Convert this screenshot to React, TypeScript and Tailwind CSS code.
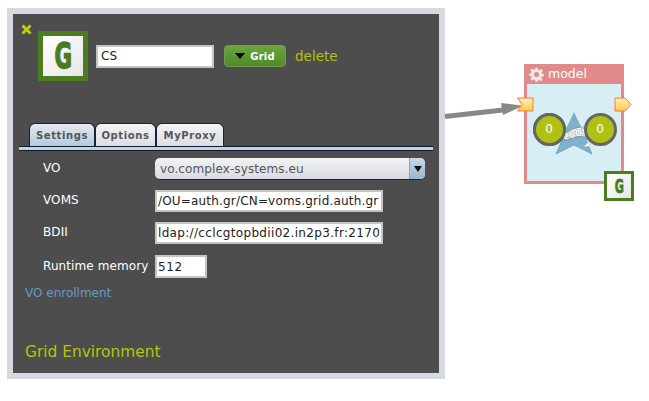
import React from "react";

const dv = "font-['DejaVu_Sans',sans-serif]";

function GBadge({ big }: { big?: boolean }) {
  return big ? (
    <div className="w-[50px] h-[50px] shrink-0 border-[5px] border-[#4b7c1f] bg-gradient-to-br from-white to-[#e6e6e6] flex items-center justify-center">
      <span className="font-['DejaVu_Sans_Condensed',sans-serif] font-bold text-[36px] leading-none text-[#4b7c1f] inline-block scale-x-[0.66] [-webkit-text-stroke:1.4px_#4b7c1f]">G</span>
    </div>
  ) : (
    <div className="w-[30px] h-[30px] border-[3px] border-[#4b7c1f] bg-gradient-to-br from-white to-[#e6e6e6] flex items-center justify-center">
      <span className="font-['DejaVu_Sans_Condensed',sans-serif] font-bold text-[20px] leading-none text-[#4b7c1f] inline-block scale-x-[0.62] [-webkit-text-stroke:0.8px_#4b7c1f]">G</span>
    </div>
  );
}

function Tab({ label, active, w }: { label: string; active?: boolean; w: string }) {
  return (
    <div
      className={`${w} h-[23px] border border-b-0 border-[#16233a] rounded-t-[6px] flex items-center justify-center text-[10px] font-bold tracking-[0.6px] text-[#55555c] ${
        active ? "bg-gradient-to-b from-[#e4e8ee] to-[#b4cade]" : "bg-gradient-to-b from-[#f4f4f6] to-[#dcdde2]"
      }`}
    >
      {label}
    </div>
  );
}

function Field({ value, w, h, track }: { value: string; w: string; h: string; track: string }) {
  return (
    <div className={`${w} ${h} ${track} bg-white border-2 border-[#c4c4c4] flex items-center pl-[1px] text-[12px] text-[#222] whitespace-nowrap overflow-hidden`}>
      {value}
    </div>
  );
}

function Row({ label, children, cls }: { label: string; children: React.ReactNode; cls: string }) {
  return (
    <div className={`flex items-center ${cls}`}>
      <div className="w-[112px] pb-[2px] text-[12px] text-white tracking-[0.1px] whitespace-nowrap">{label}</div>
      {children}
    </div>
  );
}

function Slot({ input }: { input?: boolean }) {
  return (
    <svg width="18" height="16" viewBox="0 0 18 16" className="block">
      <defs>
        <linearGradient id={input ? "si" : "so"} x1="0" y1="0" x2="0" y2="1">
          <stop offset="0" stopColor="#fff2b8" />
          <stop offset="1" stopColor="#fcc850" />
        </linearGradient>
      </defs>
      {input ? (
        <path d="M0.5 1 H16 V14 H0.5 L5 7.500 Z" fill="url(#si)" stroke="#f97b2e" />
      ) : (
        <path d="M1 1 H11 L17 7.500 L11 14 H1 Z" fill="url(#so)" stroke="#f97b2e" />
      )}
    </svg>
  );
}

function Bubble() {
  return (
    <div className="relative w-[33px] h-[33px] rounded-full bg-[#b0c114] border-[3px] border-[#666] flex items-center justify-center text-[12px] text-white">
      0
    </div>
  );
}

export default function App() {
  return (
    <div className={`relative w-[649px] h-[401px] bg-white overflow-hidden pt-[8px] pl-[7px] ${dv}`}>
      {/* panel */}
      <div className="relative w-[438px] h-[371px] border-[6px] border-[#d6d9e0] bg-[#4d4d4d]">
        <svg width="11" height="11" viewBox="0 0 11 11" className="absolute left-[8px] top-[10px]">
          <path d="M1.500 1.500 L9.500 9.500 M9.500 1.500 L1.500 9.500" stroke="#c0cc0a" strokeWidth="3" />
        </svg>

        <div className="flex items-center pt-[17px] pl-[25px]">
          <GBadge big />
          <div className="ml-[8px] w-[118px] h-[23px] bg-white border-2 border-[#c4c4c4] flex items-center pl-[3px] text-[12px] text-[#222]">CS</div>
          <div className="ml-[10px] w-[62px] h-[22px] rounded-[4px] bg-gradient-to-b from-[#6aa63a] to-[#518a28] border border-[#6f9c55] flex items-center justify-center gap-[5px]">
            <span className="w-0 h-0 border-x-[5px] border-x-transparent border-t-[6px] border-t-black" />
            <span className="text-[10px] font-bold text-white tracking-[0.2px]">Grid</span>
          </div>
          <span className="ml-[9px] text-[13.5px] text-[#b4c40a]">delete</span>
        </div>

        {/* tabs */}
        <div className="mt-[42px] pl-[16px] flex">
          <Tab label="Settings" active w="w-[66px]" />
          <Tab label="Options" w="w-[61px]" />
          <Tab label="MyProxy" w="w-[68px]" />
        </div>
        <div className="ml-[6px] w-[414px] h-[5px] bg-[#c3d3e4] border-b border-b-[#0f1a2c] border-t border-t-[#0f1a2c]" />

        {/* form */}
        <div className="pl-[30px]">
          <Row label="VO" cls="mt-[7px] h-[22px]">
            <div className="w-[270px] h-[22px] rounded-[5px] bg-gradient-to-b from-[#f2f3f5] to-[#d9dbe2] border-b border-b-[#222] flex items-center justify-between text-[12px] text-[#555] overflow-hidden">
              <span className="pl-[5px] tracking-[0.1px]">vo.complex-systems.eu</span>
              <span className="w-[16px] h-full bg-gradient-to-b from-[#cad8e6] to-[#9bb5cd] border-l border-l-[#8aa] flex items-center justify-center">
                <span className="w-0 h-0 border-x-[4px] border-x-transparent border-t-[6px] border-t-[#111]" />
              </span>
            </div>
          </Row>
          <Row label="VOMS" cls="mt-[10px]">
            <Field value="/OU=auth.gr/CN=voms.grid.auth.gr" w="w-[228px]" h="h-[22px]" track="tracking-[0.18px]" />
          </Row>
          <Row label="BDII" cls="mt-[10px]">
            <Field value="ldap://cclcgtopbdii02.in2p3.fr:2170" w="w-[228px]" h="h-[22px]" track="tracking-[0.33px]" />
          </Row>
          <Row label="Runtime memory" cls="mt-[11px]">
            <Field value="512" w="w-[52px]" h="h-[23px]" track="tracking-[0.6px]" />
          </Row>
        </div>
        <div className="mt-[7px] pl-[12px] text-[12px] leading-[16px] text-[#6b98c8]">VO enrollment</div>
        <div className="absolute left-[12px] bottom-[12px] text-[15.4px] leading-[18px] text-[#b4c40a]">Grid Environment</div>
      </div>

      {/* arrow on canvas */}
      <svg width="90" height="30" viewBox="0 0 90 30" className="absolute left-[440px] top-[95px]">
        <path d="M5 21.500 L63 15" stroke="#888888" strokeWidth="5" fill="none" />
        <path d="M61 8 L63 20 L83 10.700 Z" fill="#888888" />
      </svg>

      {/* model node */}
      <div className="absolute left-[524px] top-[64px] w-[100px] h-[120px] bg-[#e08a8a] p-[3px] pt-0 flex flex-col">
        <div className="h-[20px] flex items-center gap-[4px] pl-[2px] text-[12.5px] text-white">
          <svg width="15" height="15" viewBox="0 0 24 24" fill="#e8e8e8">
            <path d="M10 1h4l.6 3.200 2 .9L19.400 3.200l2.800 2.800-1.900 2.800.9 2L24 11.500v3l-3.200.6-.9 2 1.900 2.800-2.800 2.800-2.800-1.900-2 .9L13.500 24h-3l-.6-3.200-2-.9-2.800 1.900-2.800-2.800 1.900-2.800-.9-2L0 13.500v-3l3.200-.6.9-2L2.200 5.100 5 2.300l2.800 1.900 2-.9Z M12 8a4 4 0 1 0 0 8 4 4 0 0 0 0-8Z" fillRule="evenodd" />
          </svg>
          <span>model</span>
        </div>
        <div className="flex-1 bg-[#d8eef5] flex items-center justify-center pb-[7px] pl-[1px]">
          <div className="relative flex gap-[18px]">
            <Bubble />
            <svg width="58" height="46" viewBox="0 0 58 46" className="absolute left-[12px] top-[-3px]">
              <path d="M29 3 L36 18 L58 18 L41 30 L47 44 L29 35 L11 44 L17 30 L0 18 L22 18 Z" fill="#7fb2ca" stroke="#5d95ae" strokeWidth="0.6" />
              <path d="M19 24 Q30 16 41 17 L41 27 Q30 25 20 31 Z" fill="#eef3f5" stroke="#66797f" strokeWidth="0.6" />
              <text x="30" y="27" textAnchor="middle" transform="rotate(-14 30 24)" fontSize="9" fontWeight="bold" fill="#fff" stroke="#4c5c62" strokeWidth="0.6" paintOrder="stroke" fontFamily="DejaVu Sans Condensed, sans-serif">COOL</text>
              <path d="M38 36 q5 2 7 -1 l-1 -3 q-3 3 -6 4 Z" fill="#fff" stroke="#8aa" strokeWidth="0.4" />
            </svg>
            <div className="absolute left-0 top-0"><Bubble /></div>
            <Bubble />
          </div>
        </div>
        <div className="absolute left-[-7px] top-[33px]"><Slot input /></div>
        <div className="absolute right-[-8px] top-[33px]"><Slot /></div>
        <div className="absolute left-[80px] top-[107px]"><GBadge /></div>
      </div>
    </div>
  );
}
